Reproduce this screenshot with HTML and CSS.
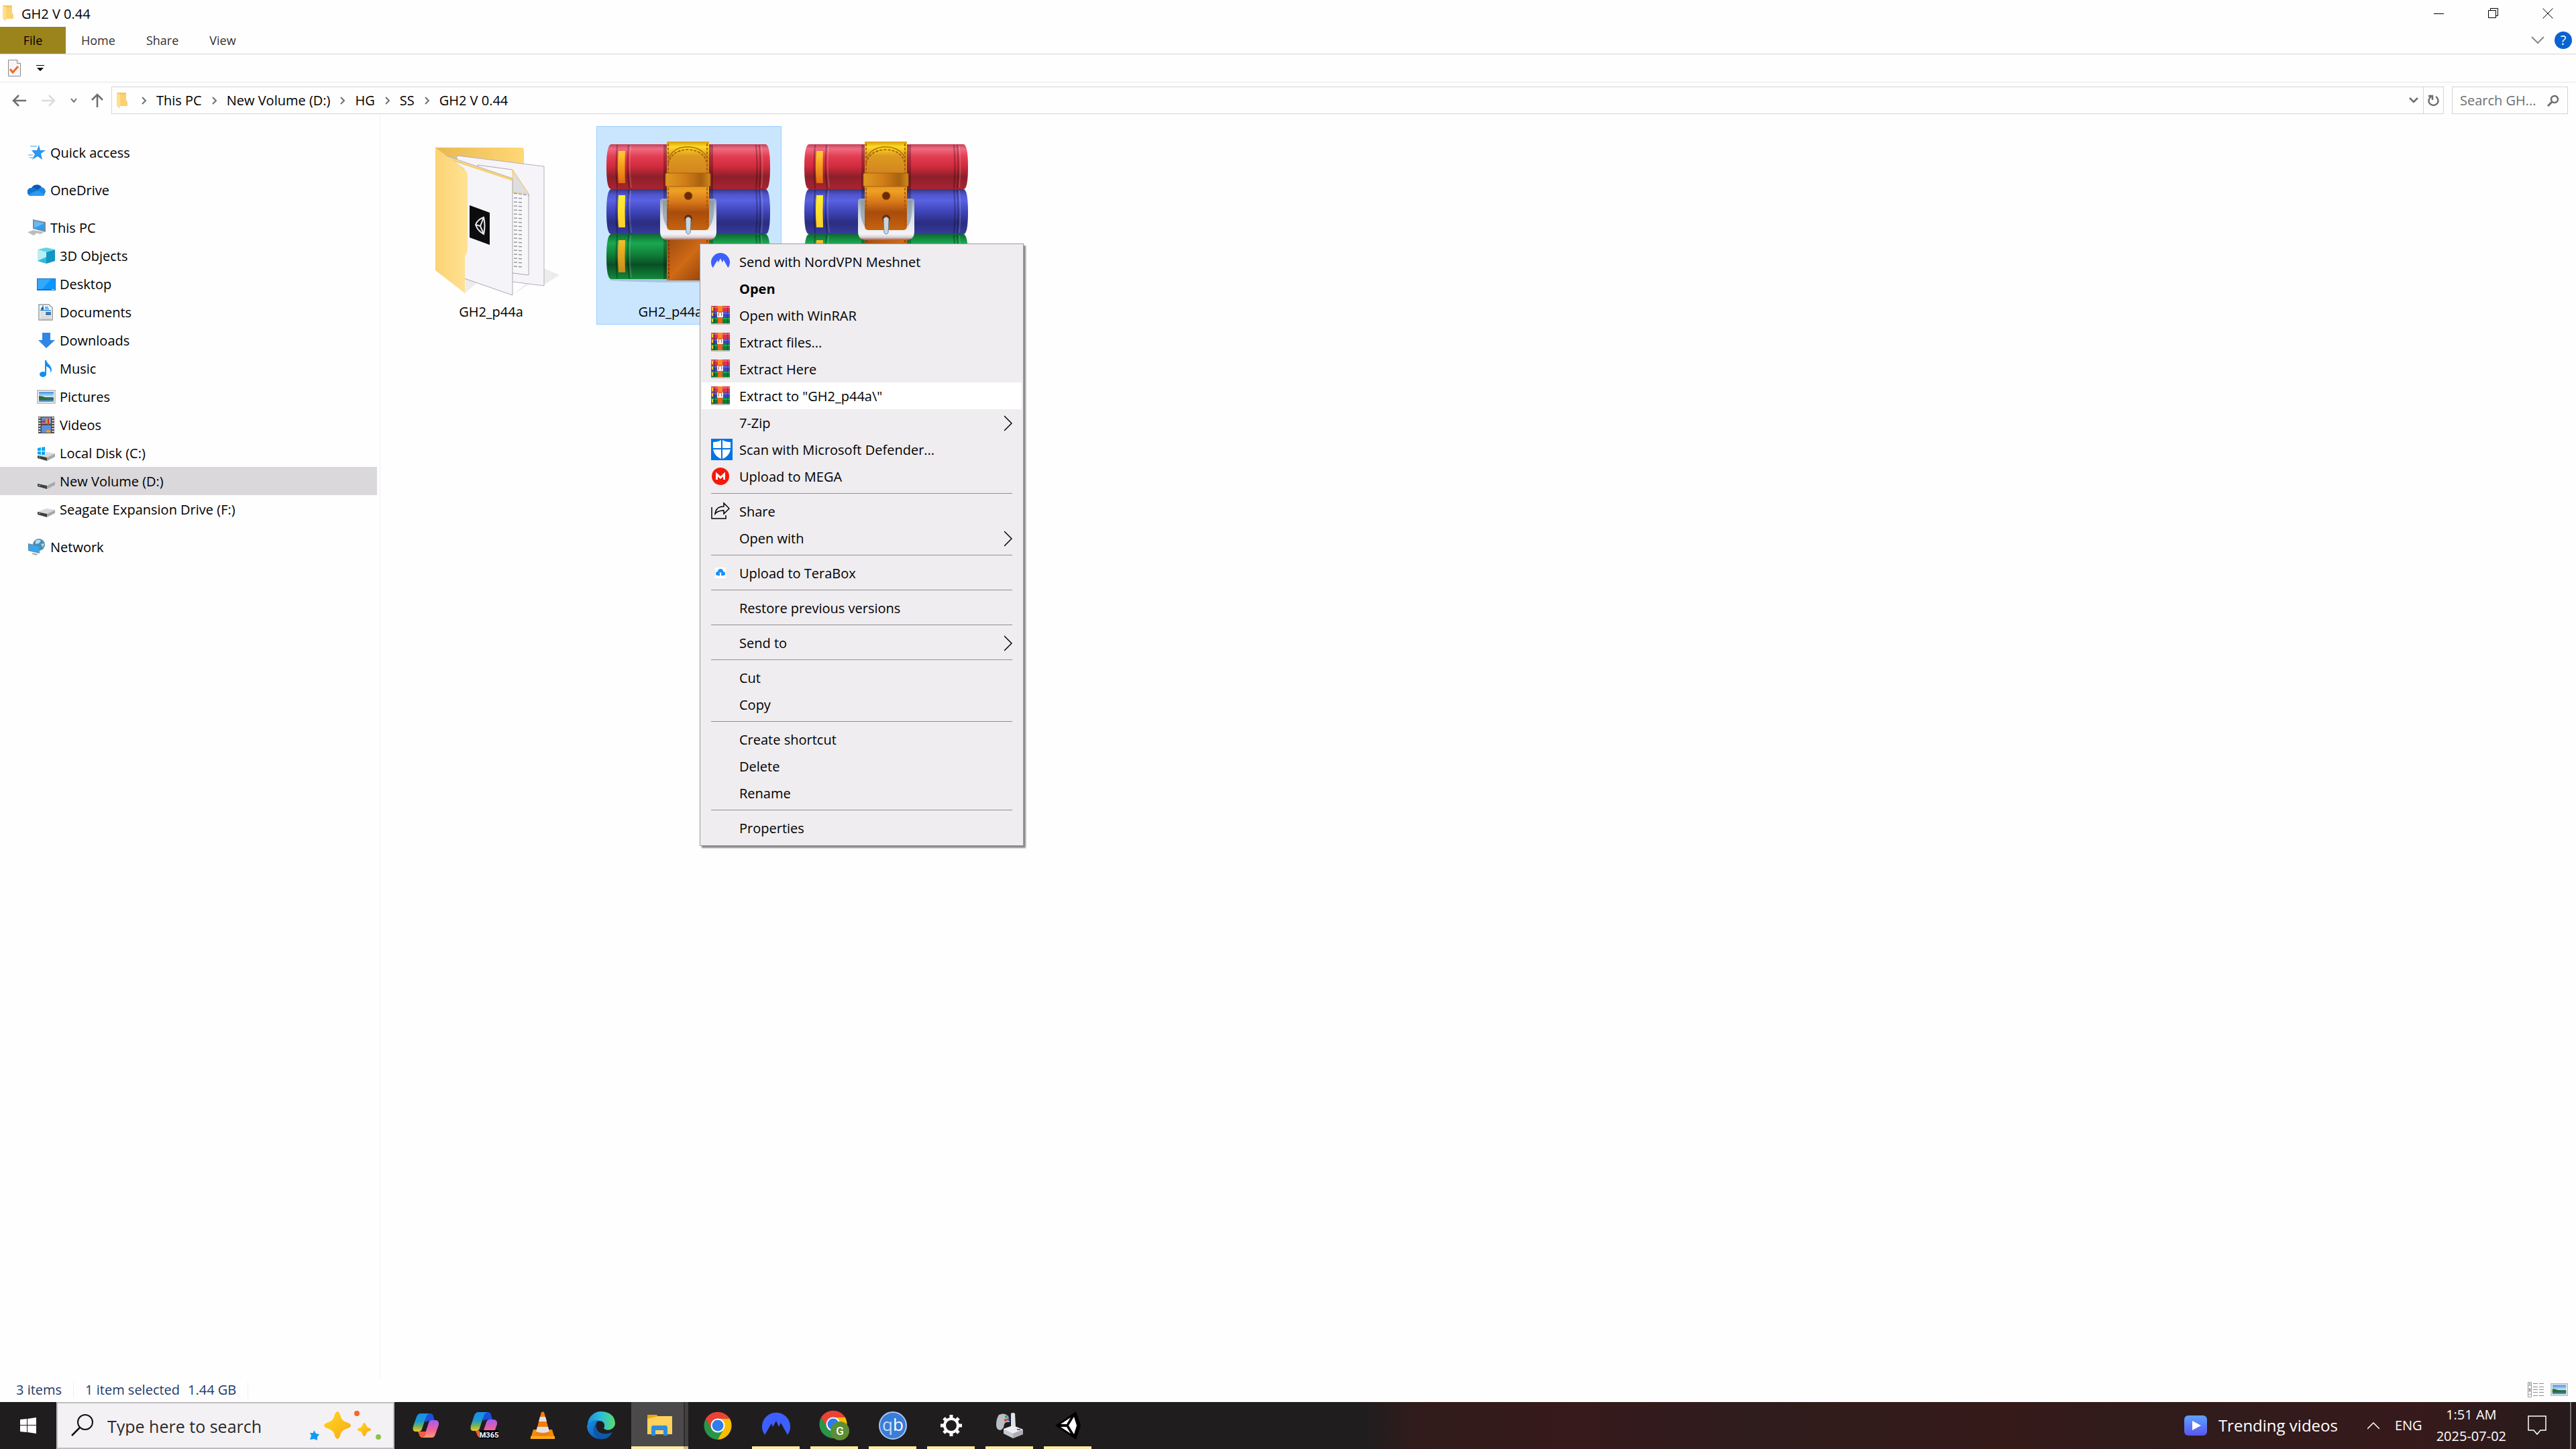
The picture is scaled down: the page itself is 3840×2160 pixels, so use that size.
FILE: index.html
```html
<!DOCTYPE html>
<html lang="en">
<head>
<meta charset="utf-8">
<title>GH2 V 0.44</title>
<link rel="stylesheet" href="styles.css">
</head>
<body>
<svg class="defs" aria-hidden="true">
  <defs>
    <linearGradient id="red" x1="0" y1="0" x2="0" y2="1"><stop offset="0" stop-color="#c7405a"/><stop offset=".1" stop-color="#ee6b80"/><stop offset=".28" stop-color="#e23c50"/><stop offset=".5" stop-color="#cf2b3c"/><stop offset=".72" stop-color="#8e1f2a"/><stop offset="1" stop-color="#a82432"/></linearGradient>
    <linearGradient id="blue" x1="0" y1="0" x2="0" y2="1"><stop offset="0" stop-color="#35377a"/><stop offset=".12" stop-color="#5055cf"/><stop offset=".25" stop-color="#5a61e2"/><stop offset=".5" stop-color="#3f44b8"/><stop offset=".75" stop-color="#2a2d80"/><stop offset="1" stop-color="#383c9c"/></linearGradient>
    <linearGradient id="green" x1="0" y1="0" x2="0" y2="1"><stop offset="0" stop-color="#0d6a30"/><stop offset=".2" stop-color="#1aa850"/><stop offset=".45" stop-color="#118039"/><stop offset=".68" stop-color="#0a4f24"/><stop offset="1" stop-color="#118a3c"/></linearGradient>
    <linearGradient id="strap" x1="0" y1="0" x2="0" y2="1"><stop offset="0" stop-color="#d99c10"/><stop offset=".06" stop-color="#ffdc20"/><stop offset=".16" stop-color="#dc9a20"/><stop offset=".35" stop-color="#d4861e"/><stop offset=".56" stop-color="#eda022"/><stop offset=".68" stop-color="#d8781a"/><stop offset=".8" stop-color="#a84c0c"/><stop offset="1" stop-color="#c8640f"/></linearGradient>
    <linearGradient id="strap2" x1="0" y1="0" x2="1" y2="1"><stop offset="0" stop-color="#9c4a10"/><stop offset=".5" stop-color="#cf6a16"/><stop offset="1" stop-color="#8a3d0a"/></linearGradient>
    <linearGradient id="loop" x1="0" y1="0" x2="1" y2="0"><stop offset="0" stop-color="#e09a20"/><stop offset=".45" stop-color="#d07c18"/><stop offset=".8" stop-color="#a8620e"/><stop offset="1" stop-color="#d08a1c"/></linearGradient>
    <linearGradient id="metal" x1="0" y1="0" x2="0" y2="1"><stop offset="0" stop-color="#8fa0ae"/><stop offset=".4" stop-color="#d5dbe2"/><stop offset=".85" stop-color="#f4f4f8"/><stop offset=".93" stop-color="#d8d0d4"/><stop offset="1" stop-color="#a85a40"/></linearGradient>
    <linearGradient id="tab" x1="0" y1="0" x2="0" y2="1"><stop offset="0" stop-color="#ffd030"/><stop offset=".5" stop-color="#f39a1c"/><stop offset="1" stop-color="#e06a10"/></linearGradient>
    <linearGradient id="tab2" x1="0" y1="0" x2="0" y2="1"><stop offset="0" stop-color="#fff030"/><stop offset=".5" stop-color="#ffc828"/><stop offset="1" stop-color="#c88a18"/></linearGradient>
    <linearGradient id="fold" x1="0" y1="0" x2="1" y2="0"><stop offset="0" stop-color="#fbd375"/><stop offset="1" stop-color="#ffe293"/></linearGradient>
    <linearGradient id="foldback" x1="0" y1="0" x2="1" y2="0"><stop offset="0" stop-color="#e9b850"/><stop offset="1" stop-color="#ffd877"/></linearGradient>
    <linearGradient id="sky" x1="0" y1="0" x2="0" y2="1"><stop offset="0" stop-color="#3f8fe0"/><stop offset=".5" stop-color="#cde8fa"/><stop offset=".55" stop-color="#3d7c5c"/><stop offset=".72" stop-color="#2f6a80"/><stop offset="1" stop-color="#5aa0d0"/></linearGradient>
    <linearGradient id="cpa" x1="0" y1="0" x2="0" y2="1"><stop offset="0" stop-color="#1a8cf0"/><stop offset=".45" stop-color="#1c9bd0"/><stop offset=".7" stop-color="#6cb35c"/><stop offset="1" stop-color="#f5c81c"/></linearGradient>
    <linearGradient id="cpb" x1="0" y1="0" x2="0" y2="1"><stop offset="0" stop-color="#a35cf5"/><stop offset=".55" stop-color="#f0609c"/><stop offset="1" stop-color="#ff9a6a"/></linearGradient>
    <linearGradient id="edgea" x1="0" y1="0" x2="1" y2="0"><stop offset="0" stop-color="#1a8fdc"/><stop offset=".5" stop-color="#2cbfd8"/><stop offset="1" stop-color="#5bdc68"/></linearGradient>
    <linearGradient id="edgeb" x1="0" y1="0" x2="1" y2="1"><stop offset="0" stop-color="#1a90e8"/><stop offset="1" stop-color="#0c4fa8"/></linearGradient>
    <linearGradient id="play" x1="0" y1="0" x2="0" y2="1"><stop offset="0" stop-color="#5ea2ff"/><stop offset="1" stop-color="#5a55ee"/></linearGradient>
    <linearGradient id="gold" x1="0" y1="0" x2="1" y2="1"><stop offset="0" stop-color="#ffd91c"/><stop offset="1" stop-color="#f7a81c"/></linearGradient>

    <symbol id="folder-small" viewBox="0 0 18 26">
      <path fill="#f2c866" d="M1 1h14v20H1z"/><path fill="#ffdf8c" d="M1 1l5 3v21l-5-4z"/><path fill="#fbd271" d="M6 4h9v8l2 3v6H6z"/>
    </symbol>

    <symbol id="rar-large" viewBox="0 0 256 256">
      <ellipse cx="127" cy="225" rx="118" ry="4" fill="#5a7a90" opacity=".3"/>
      <path fill="url(#red)" d="M12 23H242q7 0 7 34t-7 33H12q-7 0-7-33t7-34z"/>
      <path fill="url(#blue)" d="M12 90H242q7 0 7 34t-7 33H12q-7 0-7-33t7-34z"/>
      <path fill="url(#green)" d="M12 157H242q7 0 7 34t-7 33H12q-7 0-7-33t7-34z"/>
      <path fill="none" stroke="#000" stroke-opacity=".28" stroke-width="2" d="M21 24q-3 33 0 65M38 24q-3 33 1 65M228 24q3 33 0 65M233 24q3 33 0 65M21 91q-3 33 0 65M38 91q-3 33 1 65M228 91q3 33 0 65M233 91q3 33 0 65M21 158q-3 33 0 65M38 158q-3 33 1 65M228 158q3 33 0 65M233 158q3 33 0 65"/>
      <path fill="none" stroke="#fff" stroke-opacity=".16" stroke-width="2" d="M41 25q-3 32 1 63M236 25q3 32 0 63M41 92q-3 32 1 63M236 92q3 32 0 63M41 159q-3 32 1 63M236 159q3 32 0 63"/>
      <path fill="#000" opacity=".25" d="M90 24h5v200h-5zM158 24h6v200h-6z"/>
      <path fill="url(#tab)" d="M23 33h10q-1 24 0 48H23q-2-24 0-48z"/>
      <path fill="url(#tab2)" d="M23 99h10q-1 24 0 48H23q-2-24 0-48zM23 166h10q-1 24 0 48H23q-2-24 0-48z"/>
      <path fill="url(#strap2)" d="M95 160h63v66H95z"/>
      <path fill="none" stroke="#7c2c06" stroke-width="1.5" stroke-dasharray="4 2" d="M98 165v60M155 165v60"/>
      <path fill="url(#metal)" d="M85 108q0-4 4-4h76q4 0 4 4v45q0 13-13 13H98q-13 0-13-13z"/>
      <path fill="#7e91a2" opacity=".6" d="M89 107h7v40q-6-8-7-20zM158 107h7v20q-1 12-7 20z"/>
      <path fill="url(#strap)" d="M95 19h63v126q0 6-6 6h-51q-6 0-6-6z"/>
      <path fill="none" stroke="#a8500c" stroke-width="1.6" stroke-dasharray="4 2" d="M97 22v122M155 22v122M97 52q5-20 29-21 25 1 29 21"/>
      <path fill="none" stroke="#a87210" stroke-width="1.5" d="M97 45q8-18 29-18 22 0 30 18"/>
      <rect x="93" y="66" width="67" height="20" rx="2" fill="url(#loop)" stroke="#a8600c"/>
      <circle cx="127" cy="100" r="6" fill="#6a2c08" stroke="#a8560c"/>
      <circle cx="127" cy="134" r="6" fill="#6a2c08"/>
      <path fill="#c9d6e0" stroke="#6d8494" d="M123 134q4-5 8 0l-1 21q-3 4-6 0z"/>
    </symbol>

    <symbol id="rar-small" viewBox="0 0 28 28">
      <path fill="#d8344c" d="M0 0h28v9H0z"/><path fill="#f0657c" d="M0 1h28v2H0z"/>
      <path fill="#3f47b4" d="M0 9h28v8H0z"/><path fill="#6068d8" d="M0 10h28v2H0z"/>
      <path fill="#0f7d38" d="M0 17h28v9H0z"/><path fill="#1ea652" d="M0 18h28v2H0z"/>
      <path fill="#b9bdb9" d="M0 26h28v2H0z"/><path fill="#ffc928" d="M1 2h2v5H1zM1 10h2v5H1zM1 19h2v5H1z"/>
      <path fill="#000" opacity=".25" d="M4 0h2v26H4zM24 0h1v26h-1z"/>
      <path fill="#e8641a" d="M10 0h7v26h-7z"/><path fill="#ff8a20" d="M10 0h7v8h-7z"/>
      <path fill="#e9e3ef" d="M9 9h2v8H9zM16 9h2v8h-2zM9 15h9v2H9z"/><path fill="#fff" d="M12 10h3v6h-3z"/>
    </symbol>

    <symbol id="drive" viewBox="0 0 28 28">
      <path fill="#d9d9dc" d="M1 17l13-5 13 2-12 6z"/><path fill="#a9a9ad" d="M15 20l12-6v5l-12 6z"/><path fill="#3c433c" d="M1 17l14 3v5L1 21z"/><path fill="#6fdc6c" d="M3 19h2v1H3z"/>
    </symbol>

    <symbol id="picture" viewBox="0 0 28 28">
      <path fill="#fff" stroke="#b3b3b3" stroke-width="1.5" d="M1 4h26v19H1z"/><path fill="url(#sky)" d="M3 6h22v15H3z"/><path fill="#2f6b3a" d="M3 12l6 1 7 3 9 1v1H3z"/>
    </symbol>

    <symbol id="more" viewBox="0 0 12 24"><path fill="none" stroke="#000" stroke-width="1.5" d="M0 1l11 11L0 23"/></symbol>
    <symbol id="crumb" viewBox="0 0 9 14"><path fill="none" stroke="#707070" stroke-width="2" d="M2 2l5 5-5 5"/></symbol>

    <symbol id="nord" viewBox="0 0 42 36">
      <path fill="#3e5fff" d="M4 35A21 21 0 1 1 38 35L28 17l-3 6-4-9-5 9-2-5z"/>
    </symbol>

    <symbol id="chrome" viewBox="0 0 42 42">
      <path fill="#ea4335" d="M3 11A21 21 0 0 1 39 11H21z"/><path fill="#ea4335" d="M3 11l9 16 9-16z"/>
      <path fill="#fbbc04" d="M39 11A21 21 0 0 1 21 42l9-16V11z"/><path fill="#fbbc04" d="M21 11h18l-5 16-13 15z"/>
      <path fill="#2a9548" d="M3 11A21 21 0 0 0 21 42l9-16-18 0z"/>
      <circle cx="21" cy="21" r="10.500" fill="#fff"/><circle cx="21" cy="21" r="8.500" fill="#2f7cf0"/>
    </symbol>
  </defs>
</svg>

<div class="window">
  <header class="titlebar">
    <svg class="folder-icon"><use href="#folder-small"/></svg>
    <h1 class="title">GH2 V 0.44</h1>
    <div class="caption">
      <button class="caption-btn" aria-label="Minimize"><svg width="16" height="16"><path stroke="#000" d="M0 8.500h15"/></svg></button>
      <button class="caption-btn" aria-label="Restore"><svg width="16" height="16"><path fill="none" stroke="#000" d="M.5 3.500h11v11H.5zM3.500 3V.5h11v11H12"/></svg></button>
      <button class="caption-btn" aria-label="Close"><svg width="16" height="16"><path stroke="#000" d="M.5.5l15 15M15.500.5l-15 15"/></svg></button>
    </div>
  </header>

  <nav class="ribbon" aria-label="Ribbon">
    <button class="tab tab-file">File</button>
    <button class="tab">Home</button>
    <button class="tab">Share</button>
    <button class="tab">View</button>
    <div class="ribbon-end">
      <button class="plain" aria-label="Expand ribbon"><svg width="20" height="12"><path fill="none" stroke="#8a8a8a" stroke-width="2" d="M1 1l9 9 9-9"/></svg></button>
      <button class="help" aria-label="Help">?</button>
    </div>
  </nav>

  <div class="quickbar">
    <button class="plain" aria-label="Properties"><svg width="20" height="26"><path fill="#f7f5f8" stroke="#8a8a8a" d="M.5.5h13l5 5v19H.5z"/><path fill="#fff" stroke="#8a8a8a" d="M13.500.5v5h5"/><path fill="none" stroke="#f26a1e" stroke-width="3" d="M3 14l4 5 8-9"/></svg></button>
    <button class="plain" aria-label="Customize toolbar"><svg width="12" height="10"><path d="M0 0h12v1H0zM1 4h10L6 9z"/></svg></button>
  </div>

  <div class="navbar">
    <div class="nav-buttons">
      <button class="plain" aria-label="Back"><svg width="22" height="18"><path fill="none" stroke="#6e6e6e" stroke-width="2.500" d="M21 9H3M10 1L2 9l8 8"/></svg></button>
      <button class="plain" aria-label="Forward"><svg width="22" height="18"><path fill="none" stroke="#dcdcdc" stroke-width="2.500" d="M1 9h18M12 1l8 8-8 8"/></svg></button>
      <button class="plain" aria-label="Recent locations"><svg width="10" height="8"><path fill="none" stroke="#6e6e6e" stroke-width="2" d="M1 1l4 5 4-5"/></svg></button>
      <button class="plain" aria-label="Up"><svg width="18" height="22"><path fill="none" stroke="#6e6e6e" stroke-width="2.500" d="M9 21V3M1 10l8-8 8 8"/></svg></button>
    </div>
    <div class="address">
      <svg class="folder-icon"><use href="#folder-small"/></svg>
      <ol class="crumbs">
        <li><svg class="crumb-sep"><use href="#crumb"/></svg><a href="#">This PC</a></li>
        <li><svg class="crumb-sep"><use href="#crumb"/></svg><a href="#">New Volume (D:)</a></li>
        <li><svg class="crumb-sep"><use href="#crumb"/></svg><a href="#">HG</a></li>
        <li><svg class="crumb-sep"><use href="#crumb"/></svg><a href="#">SS</a></li>
        <li><svg class="crumb-sep"><use href="#crumb"/></svg><a href="#">GH2 V 0.44</a></li>
      </ol>
      <button class="plain drop" aria-label="Previous locations"><svg width="14" height="10"><path fill="none" stroke="#6e6e6e" stroke-width="2.500" d="M1 1l6 6 6-6"/></svg></button>
      <button class="plain refresh" aria-label="Refresh"><svg width="18" height="18"><path fill="none" stroke="#6e6e6e" stroke-width="2.500" d="M12 3a7 7 0 1 1-7 0M1 2h6v6"/></svg></button>
    </div>
    <div class="find">
      <input class="find-input" type="text" placeholder="Search GH..." aria-label="Search GH2 V 0.44">
      <svg width="18" height="18"><circle cx="11" cy="7" r="5" fill="none" stroke="#6e6e6e" stroke-width="2.500"/><path stroke="#6e6e6e" stroke-width="3" d="M7 11l-6 6"/></svg>
    </div>
  </div>

  <main class="body">
    <nav class="tree" aria-label="Folders">
      <ul class="tree-list">
        <li class="group"><a class="node" href="#"><svg class="ico" viewBox="0 0 28 28"><path fill="#2b97ee" d="M17 2l2 8 8 0-7 5 2 9-7-5-8 5 4-8-5-6 8 0z"/><path stroke="#7cc0f5" stroke-width="1.500" d="M4 4h10M1 17h7M3 21h6"/></svg>Quick access</a></li>
        <li class="group"><a class="node" href="#"><svg class="ico" viewBox="0 0 28 28"><path fill="#0a5bb8" d="M6 12a8 7 0 0 1 15-3l-6 8z"/><path fill="#1173d4" d="M6 10a7 6 0 0 1 6 1l7 9-14 2a6 6 0 0 1 1-12z"/><path fill="#1b88e4" d="M15 13l5-4a7 7 0 0 1 7 7l-3 6H6q-4 0-5-3z"/><path fill="#2a9cf2" d="M3 20l12-6 11 6q-2 2-5 2H7q-3 0-4-2z"/></svg>OneDrive</a></li>
        <li class="group"><a class="node" href="#"><svg class="ico" viewBox="0 0 28 28"><path fill="#7d8b96" d="M8 1l19 4v15L8 15z"/><path fill="#2f9df0" d="M10 3l15 4v11l-15-4z"/><path fill="#63bcf8" d="M10 3l15 4-15 7z"/><path fill="#b8bcc2" d="M14 18l11 2-6 3-6-2zM0 20l9-3 8 2-8 6z"/></svg>This PC</a>
          <ul class="children">
            <li><a class="node" href="#"><svg class="ico" viewBox="0 0 28 28"><path fill="#5fd3e6" d="M1 4l13-3 13 3-13 4z"/><path fill="#b9eef4" d="M1 4l13 4v17L1 21z"/><path fill="#1296c4" d="M27 4L14 8v17l13-4z"/><path fill="#35b8d8" d="M1 21l13-6v10z"/></svg>3D Objects</a></li>
            <li><a class="node" href="#"><svg class="ico" viewBox="0 0 28 28"><path fill="#1474c4" d="M0 5h28v18H0z"/><path fill="#0a96ff" d="M1 6h26v15H1z"/><path fill="#33a8ff" d="M1 6h20L8 21H1z"/><path fill="#bfe2ff" d="M22 21h4v1h-4z"/></svg>Desktop</a></li>
            <li><a class="node" href="#"><svg class="ico" viewBox="0 0 28 28"><path fill="#fbfbfb" stroke="#9a9a9a" stroke-width="1.500" d="M3 2h15l5 5v18H3z"/><path stroke="#2a90e0" stroke-width="1.500" d="M12 6h5M5 11h16M12 8.500h6M6 9.500l3-5 1 5"/><path stroke="#a8a8a8" d="M5 14.500h7M5 17.500h7M5 20.500h16M5 23h16"/><path fill="#3f78b0" d="M13 13h8v5h-8z"/></svg>Documents</a></li>
            <li><a class="node" href="#"><svg class="ico" viewBox="0 0 28 28"><path fill="#2f86e4" d="M8 2h12v11h7L14 25 2 13h6z"/></svg>Downloads</a></li>
            <li><a class="node" href="#"><svg class="ico" viewBox="0 0 28 28"><ellipse cx="9" cy="22" rx="5" ry="4" fill="#0e8ff5"/><path fill="#0e8ff5" d="M12 1h2c1 6 8 7 8 15l-2 4c1-7-2-8-6-10v12h-2z"/></svg>Music</a></li>
            <li><a class="node" href="#"><svg class="ico"><use href="#picture"/></svg>Pictures</a></li>
            <li><a class="node" href="#"><svg class="ico" viewBox="0 0 28 28"><path fill="#4a4a4a" d="M2 1h24v25H2z"/><path stroke="#ddd" stroke-width="3" stroke-dasharray="2 2" d="M4 2v23M24 2v23"/><path fill="#5d8ee6" d="M7 2h14v10H7zM7 14h14v11H7z"/><path fill="#e8a020" d="M14 4h6v6l-3 3-3-3zM14 21h6v4h-6z"/><path fill="#d03020" d="M7 8l5-2v4H7zM16 4h2v8h-2z"/></svg>Videos</a></li>
            <li><a class="node" href="#"><svg class="ico" viewBox="0 0 28 28"><use href="#drive"/><path fill="#fff" d="M0 4h13v12H0z"/><path fill="#0aa6f0" d="M1 6l5-1v5H1zM7 5l5-1v6H7zM1 11h5v5l-5-1zM7 11h5v5H7z"/></svg>Local Disk (C:)</a></li>
            <li><a class="node current" href="#"><svg class="ico"><use href="#drive"/></svg>New Volume (D:)</a></li>
            <li><a class="node" href="#"><svg class="ico"><use href="#drive"/></svg>Seagate Expansion Drive (F:)</a></li>
          </ul>
        </li>
        <li class="group"><a class="node" href="#"><svg class="ico" viewBox="0 0 28 28"><circle cx="17" cy="10" r="9" fill="#4b8fb4"/><path fill="#b8dcec" d="M12 4q5-3 8 0l-3 4-5 1zM20 9l5-1-2 6z"/><path fill="#6d8494" d="M1 8l17 4v11L1 19z"/><path fill="#35a6f4" d="M2 9l15 4v9L2 18z"/><path fill="#b0b4b8" d="M8 22l8 2-3 2-7-2z"/></svg>Network</a></li>
      </ul>
    </nav>

    <section class="files" aria-label="Files">
      <button class="tile">
        <svg class="tile-art" viewBox="0 0 256 256">
          <path fill="#000" opacity=".07" d="M89 245l26-22-25-8zM160 248l24-16h24l22-14-23-10z"/>
          <path fill="url(#foldback)" d="M45 28h128q4 0 4 4v170H45z"/>
          <path fill="#f6f4f8" stroke="#b4b2b8" d="M77 40l130 16v178l-47-6L77 200z"/>
          <path fill="#f7f6f9" stroke="#a9a8ac" d="M108 54l52 7 24 36v121l-24-3z"/>
          <path fill="#dedde0" stroke="#f5c95c" d="M160 61l24 36-24-2z"/>
          <path stroke="#9a9a9e" stroke-width="1.500" stroke-dasharray="5 2" d="M162 96l22 3M162 103l14 1M162 109l14 1M162 115l14 1M162 121l14 1M162 127l14 1M162 133l14 1M162 139l14 1M162 145l14 1M162 151l14 1M162 157l14 1M162 163l14 1M162 169l14 1M162 175l14 1M162 181l14 1M162 187l14 1M162 193l14 1M162 199l14 1M162 205l14 1"/>
          <path fill="#f5f4f8" stroke="#aaa9ad" d="M60 40l100 34v174l-72-25V60z"/>
          <path fill="none" stroke="#f9cf6c" stroke-width="3" d="M66 45l94 31"/>
          <path fill="url(#fold)" d="M45 28l43 32q5 4 5 10v110q0 5-4 9v56l-44-34z"/>
          <path fill="#0c0c0e" d="M96 114l30 11v48l-30-11z"/>
          <path fill="none" stroke="#e8e8ea" stroke-width="2" d="M105 143q3-8 12-11 3 12 0 25-9-5-12-14zM105 143l7 2 5-13M112 145l5 12"/>
        </svg>
        <span class="tile-name">GH2_p44a</span>
      </button>
      <button class="tile selected">
        <svg class="tile-art"><use href="#rar-large"/></svg>
        <span class="tile-name">GH2_p44a.part1</span>
      </button>
      <button class="tile" aria-label="Archive, part 2">
        <svg class="tile-art"><use href="#rar-large"/></svg>
      </button>
    </section>
  </main>

  <footer class="status">
    <span class="status-cell">3 items</span>
    <span class="status-cell"><span>1 item selected</span><span>1.44 GB</span></span>
    <div class="views">
      <button class="plain" aria-label="Details view"><svg width="26" height="24"><path fill="#fff" stroke="#9a9aa2" d="M.5.5h5v22h-5zM.5 5.500h5M.5 10h5M.5 14h5M.5 18.500h5"/><path fill="#3f8fc8" d="M2 2h2v2H2z"/><path fill="#d03a28" d="M2 11h2v2H2z"/><path stroke="#8a8a92" d="M8 2.500h7M17 2.500h7M8 7.500h7M17 7.500h7M8 11.500h7M17 11.500h7M8 15.500h7M17 15.500h7M8 20.500h7M17 20.500h7"/></svg></button>
      <button class="plain" aria-label="Large icons view"><svg width="26" height="26"><use href="#picture"/></svg></button>
    </div>
  </footer>
</div>

<footer class="taskbar">
  <button class="start" aria-label="Start"><svg width="24" height="24" viewBox="0 0 24 24"><path fill="#fff" d="M0 3l10-1v9H0zM11 2l13-2v11H11zM0 12h10v10L0 21zM11 12h13v12l-13-2z"/></svg></button>
  <label class="search">
    <svg width="34" height="34"><circle cx="21" cy="12" r="11" fill="none" stroke="#111" stroke-width="2"/><path stroke="#111" stroke-width="2.500" d="M13 20L1 32"/></svg>
    <input class="search-input" type="text" placeholder="Type here to search">
    <svg width="106" height="44"><path fill="url(#gold)" d="M41 1q3 0 5 8 2 6 8 8 7 2 7 5t-7 5q-6 2-8 7-2 8-5 8t-5-8q-2-5-8-7-7-2-7-5t7-5q6-2 8-8 2-8 5-8z"/><path fill="url(#gold)" d="M81 18q2 0 3 4l2 3q5 1 5 3t-5 3l-2 3q-1 4-3 4t-3-4l-2-3q-5-1-5-3t5-3l2-3q1-4 3-4z"/><path fill="#0c9cf5" d="M6 29l3 5 5 1-3 4 0 5-5-2-6 1 2-6-2-4h5z"/><circle cx="70" cy="4" r="4" fill="#f5682a"/><circle cx="102" cy="39" r="4" fill="#8bc34a"/></svg>
  </label>
  <div class="apps">
    <button class="app" aria-label="Copilot"><svg width="42" height="42" viewBox="0 0 42 42"><path fill="#1c4fd8" d="M16 3h11q4 0 5 4l2 7h-8q-4 0-5 3z"/><path fill="#f0603c" d="M9 30h12l-4 9h-1q-4 0-5-4z"/><path fill="url(#cpa)" d="M13 3h14q-4 0-6 6l-6 17q-1 4-5 4H5Q0 29 2 22L7 8q2-5 6-5z"/><path fill="url(#cpb)" d="M29 39H14q4 0 5-4l6-18q1-4 5-4h6q5 1 4 7l-5 14q-1 5-6 5z"/></svg></button>
    <button class="app" aria-label="Microsoft 365 Copilot"><svg width="46" height="42" viewBox="0 0 46 42"><path fill="#1c4fd8" d="M16 1h12q4 0 5 4l2 7h-8q-4 0-5 3z"/><path fill="#f0603c" d="M10 29h13l-4 11h-1q-5-2-6-6z"/><path fill="url(#cpa)" d="M14 1h15q-5 0-7 6l-6 18q-1 4-5 4H6Q1 28 3 21L8 6q2-5 6-5z"/><path fill="url(#cpb)" d="M31 38H15q4 0 5-4l6-18q1-4 5-4h6q6 1 5 7l-5 14q-1 5-6 5z"/><rect x="16" y="28" width="28" height="13" rx="2" fill="#000"/><text class="badge-m" x="30" y="39" text-anchor="middle">M365</text></svg></button>
    <button class="app" aria-label="VLC"><svg width="38" height="42" viewBox="0 0 38 42"><path fill="#f58a0c" d="M5 27h28l4 13q0 1-1 1H1q-1 0 0-1z"/><path fill="#ffab1a" d="M1 37h36v4H1z"/><path fill="#f57c0a" d="M17 1q2-1 4 0l9 33q-11 6-22 0z"/><path fill="#dfe1e6" d="M15 8h8l2 7H13zM11 23h16l2 7q-10 4-20 0z"/></svg></button>
    <button class="app" aria-label="Edge"><svg width="42" height="42" viewBox="0 0 42 42"><path fill="url(#edgea)" d="M1 18A20 20 0 0 1 21 0q20 1 21 18c0 8-12 13-17 7 3-5 0-11-7-11-9 0-15 4-17 12z"/><path fill="url(#edgeb)" d="M0 21q5-9 17-8-7 8-4 18 2 8 10 10A20 20 0 0 1 0 21z"/><path fill="#0f57a8" d="M15 16q-4 7 2 14 8 6 21 1-6 12-19 10Q9 38 10 26q1-6 5-10z"/></svg></button>
    <button class="app running active" aria-label="File Explorer"><svg width="38" height="34" viewBox="0 0 38 34"><path fill="#f0a30a" d="M1 1h14l3 4v4H1z"/><path fill="#ffd25e" d="M1 7l16-4h20q1 0 1 1v26H1z"/><path fill="#2f8ce0" d="M7 32V20q0-3 3-3h18q3 0 3 3v12h-6v-8H13v8z"/></svg></button>
    <button class="app" aria-label="Chrome"><svg width="42" height="42"><use href="#chrome"/></svg></button>
    <button class="app running" aria-label="NordVPN"><svg class="lift" width="42" height="36"><use href="#nord"/></svg></button>
    <button class="app running" aria-label="Chrome, profile G"><svg width="46" height="46" viewBox="0 0 46 46"><use href="#chrome" width="42" height="42"/><circle cx="31" cy="31" r="14" fill="#5c8f35"/><text class="badge-g" x="31" y="37" text-anchor="middle">G</text></svg></button>
    <button class="app running" aria-label="qBittorrent"><svg width="42" height="42" viewBox="0 0 42 42"><circle cx="21" cy="21" r="20" fill="#3a7cd8" stroke="#a8c8f0" stroke-width="2"/><text class="badge-q" x="21" y="29" text-anchor="middle"><tspan fill="#c8dcf8">q</tspan><tspan fill="#fff">b</tspan></text></svg></button>
    <button class="app running" aria-label="Settings"><svg width="34" height="34" viewBox="0 0 34 34"><circle cx="17" cy="17" r="10" fill="none" stroke="#fff" stroke-width="4"/><path stroke="#fff" stroke-width="5" d="M17 1v6M17 27v6M1 17h6M27 17h6M6 6l4 4M24 24l4 4M28 6l-4 4M10 24l-4 4"/></svg></button>
    <button class="app running" aria-label="Game controllers"><svg width="42" height="40" viewBox="0 0 42 40"><path fill="#b9bdc4" d="M5 4q8-4 14 2l2 9q-6-1-8 3-1 8-6 9-6-1-6-8 0-9 4-15z"/><path fill="#e0e2e7" d="M23 2q3-2 6 0l1 20h-7z"/><path fill="#c6c9cf" d="M12 25l14-5 15 6v7L26 39l-14-7z"/><path fill="#eceef1" d="M12 25l14-5 15 6-15 6z"/><path fill="#a9adb4" d="M26 32l15-6v7l-15 6z"/><circle cx="16" cy="7" r="2" fill="#3aa04c"/><circle cx="19" cy="11" r="2" fill="#3a5cd0"/><circle cx="15" cy="12" r="2" fill="#d03a3a"/><path fill="#d83a3a" d="M32 25h5v2h-5z"/></svg></button>
    <button class="app running" aria-label="Unity"><svg width="40" height="42" viewBox="0 0 40 42"><path fill="#000" d="M1 21L32 0l7 21-7 21z"/><path fill="#fff" d="M9 19l15-10-6 10zM9 23h9l6 10zM21 21l8-13 4 13-4 13z"/></svg></button>
  </div>
  <div class="tray">
    <button class="widget"><svg width="34" height="30"><rect width="34" height="30" rx="6" fill="url(#play)"/><path fill="#fff" d="M12 8l13 7-13 7z"/></svg>Trending videos</button>
    <button class="tray-btn" aria-label="Show hidden icons"><svg width="18" height="11"><path fill="none" stroke="#fff" stroke-width="1.500" d="M0 10l9-9 9 9"/></svg></button>
    <button class="tray-btn lang">ENG</button>
    <div class="clock"><time>1:51 AM</time><time>2025-07-02</time></div>
    <button class="tray-btn notify" aria-label="Notifications"><svg width="28" height="30"><path fill="none" stroke="#fff" stroke-width="1.500" d="M1 1h26v21h-8l-5 6-5-6H1z"/></svg></button>
    <button class="peek" aria-label="Show desktop"></button>
  </div>
</footer>

<div class="menu" role="menu">
  <button class="item" role="menuitem"><svg class="item-ico"  viewBox="0 0 28 28"><use href="#nord" width="28" height="24"/></svg>Send with NordVPN Meshnet</button>
  <button class="item default" role="menuitem">Open</button>
  <button class="item" role="menuitem"><svg class="item-ico"><use href="#rar-small"/></svg>Open with WinRAR</button>
  <button class="item" role="menuitem"><svg class="item-ico"><use href="#rar-small"/></svg>Extract files...</button>
  <button class="item" role="menuitem"><svg class="item-ico"><use href="#rar-small"/></svg>Extract Here</button>
  <button class="item hover" role="menuitem"><svg class="item-ico"><use href="#rar-small"/></svg>Extract to "GH2_p44a\"</button>
  <button class="item" role="menuitem">7-Zip<svg class="more"><use href="#more"/></svg></button>
  <button class="item" role="menuitem"><svg class="item-ico wide" viewBox="0 0 32 32"><path fill="#0073e6" d="M0 0h32v32H0z"/><path fill="#fff" d="M3 5q7 0 12-3v12H3zM17 2q5 3 12 3v9H17zM3 16h12v14Q5 26 3 16zM17 16h12q-2 10-12 14z"/></svg>Scan with Microsoft Defender...</button>
  <button class="item" role="menuitem"><svg class="item-ico" viewBox="0 0 28 28"><circle cx="14" cy="14" r="13" fill="#f5190c"/><path fill="none" stroke="#fff" stroke-width="3" d="M8.500 19v-8l5.500 5 5.500-5v8"/></svg>Upload to MEGA</button>
  <hr class="rule">
  <button class="item" role="menuitem"><svg class="item-ico" viewBox="0 0 28 28"><path fill="none" stroke="#000" stroke-width="1.500" d="M1 8v17h21v-5"/><path fill="none" stroke="#000" stroke-width="1.500" d="M19 2l8 8-8 8v-5q-9 0-13 5 1-11 13-11z"/></svg>Share</button>
  <button class="item" role="menuitem">Open with<svg class="more"><use href="#more"/></svg></button>
  <hr class="rule">
  <button class="item" role="menuitem"><svg class="item-ico" viewBox="0 0 28 28"><path fill="#fff" d="M6 6h16v16H6z"/><path fill="#1890ff" d="M10 18a3 3 0 0 1 0-6 4 4 0 0 1 8 0 3 3 0 0 1 0 6h-3v-3h1l-2-2-2 2h1v3z"/></svg>Upload to TeraBox</button>
  <hr class="rule">
  <button class="item" role="menuitem">Restore previous versions</button>
  <hr class="rule">
  <button class="item" role="menuitem">Send to<svg class="more"><use href="#more"/></svg></button>
  <hr class="rule">
  <button class="item" role="menuitem">Cut</button>
  <button class="item" role="menuitem">Copy</button>
  <hr class="rule">
  <button class="item" role="menuitem">Create shortcut</button>
  <button class="item" role="menuitem">Delete</button>
  <button class="item" role="menuitem">Rename</button>
  <hr class="rule">
  <button class="item" role="menuitem">Properties</button>
</div>
</body>
</html>
```
FILE: styles.css
```css
* { box-sizing: border-box; }

body {
  margin: 0;
  min-height: 100vh;
  display: flex;
  flex-direction: column;
  background: #fefefe;
  color: #000;
  font-family: "Open Sans", "Noto Sans", sans-serif;
  font-size: 20px;
  line-height: 28px;
}

button, input {
  margin: 0;
  padding: 0;
  border: 0;
  background: none;
  color: inherit;
  font: inherit;
}

a { color: inherit; text-decoration: none; }
ul, ol { margin: 0; padding: 0; list-style: none; }
svg { display: block; flex: none; }
.defs { position: absolute; width: 0; height: 0; }
.plain { display: flex; align-items: center; justify-content: center; }

.window {
  flex: 1;
  display: flex;
  flex-direction: column;
}

/* Title bar */
.titlebar {
  display: flex;
  align-items: center;
  height: 40px;
  padding: 0 2px 0 3px;
}
.folder-icon { width: 18px; height: 26px; }
.title { margin: 2px 0 0 11px; font-size: 20px; font-weight: 400; }
.caption { display: flex; margin-left: auto; }
.caption-btn {
  display: flex;
  align-items: center;
  justify-content: center;
  width: 81px;
  height: 40px;
}

/* Ribbon tabs */
.ribbon {
  display: flex;
  align-items: stretch;
  height: 41px;
  border-bottom: 1px solid #d6d5d6;
}
.tab { padding: 0 23px; font-size: 18px; color: #333; }
.tab-file { width: 98px; background: #9c841c; color: #000; }
.ribbon-end {
  display: flex;
  align-items: center;
  gap: 15px;
  margin-left: auto;
  padding-right: 6px;
}
.help {
  width: 26px;
  height: 26px;
  border-radius: 50%;
  background: #0a63d0;
  color: #fff;
  font-size: 20px;
  line-height: 26px;
}

/* Quick access toolbar */
.quickbar {
  display: flex;
  align-items: center;
  gap: 22px;
  height: 42px;
  padding-left: 12px;
  border-bottom: 1px solid #e8e7e8;
}

/* Navigation */
.navbar {
  display: flex;
  gap: 12px;
  padding: 6px 12px 0 0;
}
.nav-buttons {
  display: flex;
  align-items: center;
  justify-content: space-between;
  width: 154px;
  padding: 0 0 0 18px;
}
.address {
  flex: 1;
  display: flex;
  align-items: center;
  height: 41px;
  padding-left: 6px;
  border: 1px solid #d6d5d6;
}
.crumbs { display: flex; flex: 1; margin-left: 19px; padding-top: 1px; }
.crumbs li { display: flex; align-items: center; gap: 14px; margin-right: 14px; }
.crumb-sep { width: 9px; height: 14px; }
.drop { width: 28px; height: 39px; }
.refresh { width: 30px; height: 39px; border-left: 1px solid #d6d5d6; }
.find {
  display: flex;
  align-items: center;
  width: 173px;
  padding: 0 12px 0 11px;
  border: 1px solid #d6d5d6;
}
.find-input { flex: 1; min-width: 0; }
.find-input::placeholder { color: #707070; opacity: 1; }

/* Body */
.body { flex: 1; display: flex; }
.tree {
  width: 567px;
  padding: 36px 4px 0 0;
  border-right: 1px solid #f2f1f2;
}
.group { margin-bottom: 14px; }
.node {
  display: flex;
  align-items: center;
  gap: 6px;
  height: 42px;
  padding: 1px 0 0 41px;
}
.children .node { padding-left: 55px; }
.current { background: #dad8db; }
.ico { width: 28px; height: 28px; }

.files {
  display: flex;
  align-items: flex-start;
  gap: 19px;
  padding: 18px 0 0 27px;
}
.tile {
  display: flex;
  flex-direction: column;
  align-items: center;
  width: 276px;
  height: 296px;
  padding-top: 3px;
  border: 1px solid transparent;
}
.selected { border-color: #99d1ff; background: #cae6ff; }
.tile-art { width: 256px; height: 256px; }
.tile-name { margin-top: 3px; }

/* Status bar */
.status {
  display: flex;
  align-items: center;
  height: 36px;
  padding: 0 12px 0 24px;
  color: #1e3a68;
}
.status-cell {
  display: flex;
  gap: 12px;
  margin-right: 17px;
  padding-right: 17px;
  border-right: 1px solid #f0eff0;
  line-height: 24px;
}
.views { display: flex; gap: 8px; margin-left: auto; }

/* Taskbar */
.taskbar {
  display: flex;
  height: 70px;
  background: linear-gradient(90deg, #201d1f 0, #201d1f 53%, #311b1a 55%, #371a1c 61%, #2f1c1c 68%, #361a1a 78%, #301b1b 84%, #371a1b 94%, #251b1c 100%);
  color: #fff;
}
.start { display: flex; align-items: center; justify-content: center; width: 84px; }
.search {
  display: flex;
  align-items: center;
  width: 504px;
  padding: 0 18px 0 20px;
  border: 2px solid #bfbdc0;
  background: #f4f1f5;
}
.search-input {
  flex: 1;
  min-width: 0;
  padding: 2px 0 0 20px;
  font-size: 25px;
}
.search-input::placeholder { color: #2a2a2a; opacity: 1; }
.apps { display: flex; margin-left: 3px; }
.app {
  display: flex;
  align-items: center;
  justify-content: center;
  width: 87px;
  height: 70px;
}
.running {
  background: linear-gradient(#ffeba8, #ffeba8) center bottom / 71px 4px no-repeat;
}
.active {
  background:
    linear-gradient(90deg, #ffeba8 78px, #c9b98a 78px) 2px bottom / 85px 4px no-repeat,
    linear-gradient(90deg, #4c494b 78px, #2f2c2e 78px, #2f2c2e 80px, #434042 80px) 2px 0 / 85px 70px no-repeat;
}
.lift { margin-bottom: 6px; }
.badge-m { fill: #fff; font: 700 11px Roboto, sans-serif; }
.badge-g { fill: #fff; font: 500 17px Roboto, sans-serif; }
.badge-q { font: 26px "Open Sans", sans-serif; }

.tray { display: flex; align-items: center; margin-left: auto; }
.widget { display: flex; align-items: center; gap: 17px; font-size: 24px; }
.tray-btn { display: flex; align-items: center; margin-left: 44px; }
.lang { margin-left: 23px; }
.clock {
  display: flex;
  flex-direction: column;
  align-items: center;
  margin-left: 21px;
  line-height: 32px;
}
.notify { margin-left: 32px; }
.peek {
  width: 9px;
  height: 70px;
  margin-left: 35px;
  border-left: 2px solid #777174;
}

/* Context menu */
.menu {
  position: absolute;
  left: 1043px;
  top: 363px;
  width: 483px;
  padding: 6px 2px;
  border: 1px solid #9c9a9d;
  background: #efedf0;
  box-shadow: 3px 3px 2px #8a888b;
}
.item {
  position: relative;
  display: flex;
  align-items: center;
  width: 100%;
  height: 40px;
  padding: 2px 14px 0 56px;
}
.default { font-weight: 700; }
.hover { background: #fff; }
.item-ico {
  position: absolute;
  top: 6px;
  left: 14px;
  width: 28px;
  height: 28px;
}
.wide { top: 4px; width: 32px; height: 32px; }
.more { width: 12px; height: 24px; margin-left: auto; }
.rule {
  height: 1px;
  margin: 5px 14px 6px;
  border: 0;
  background: #918f92;
}
```
